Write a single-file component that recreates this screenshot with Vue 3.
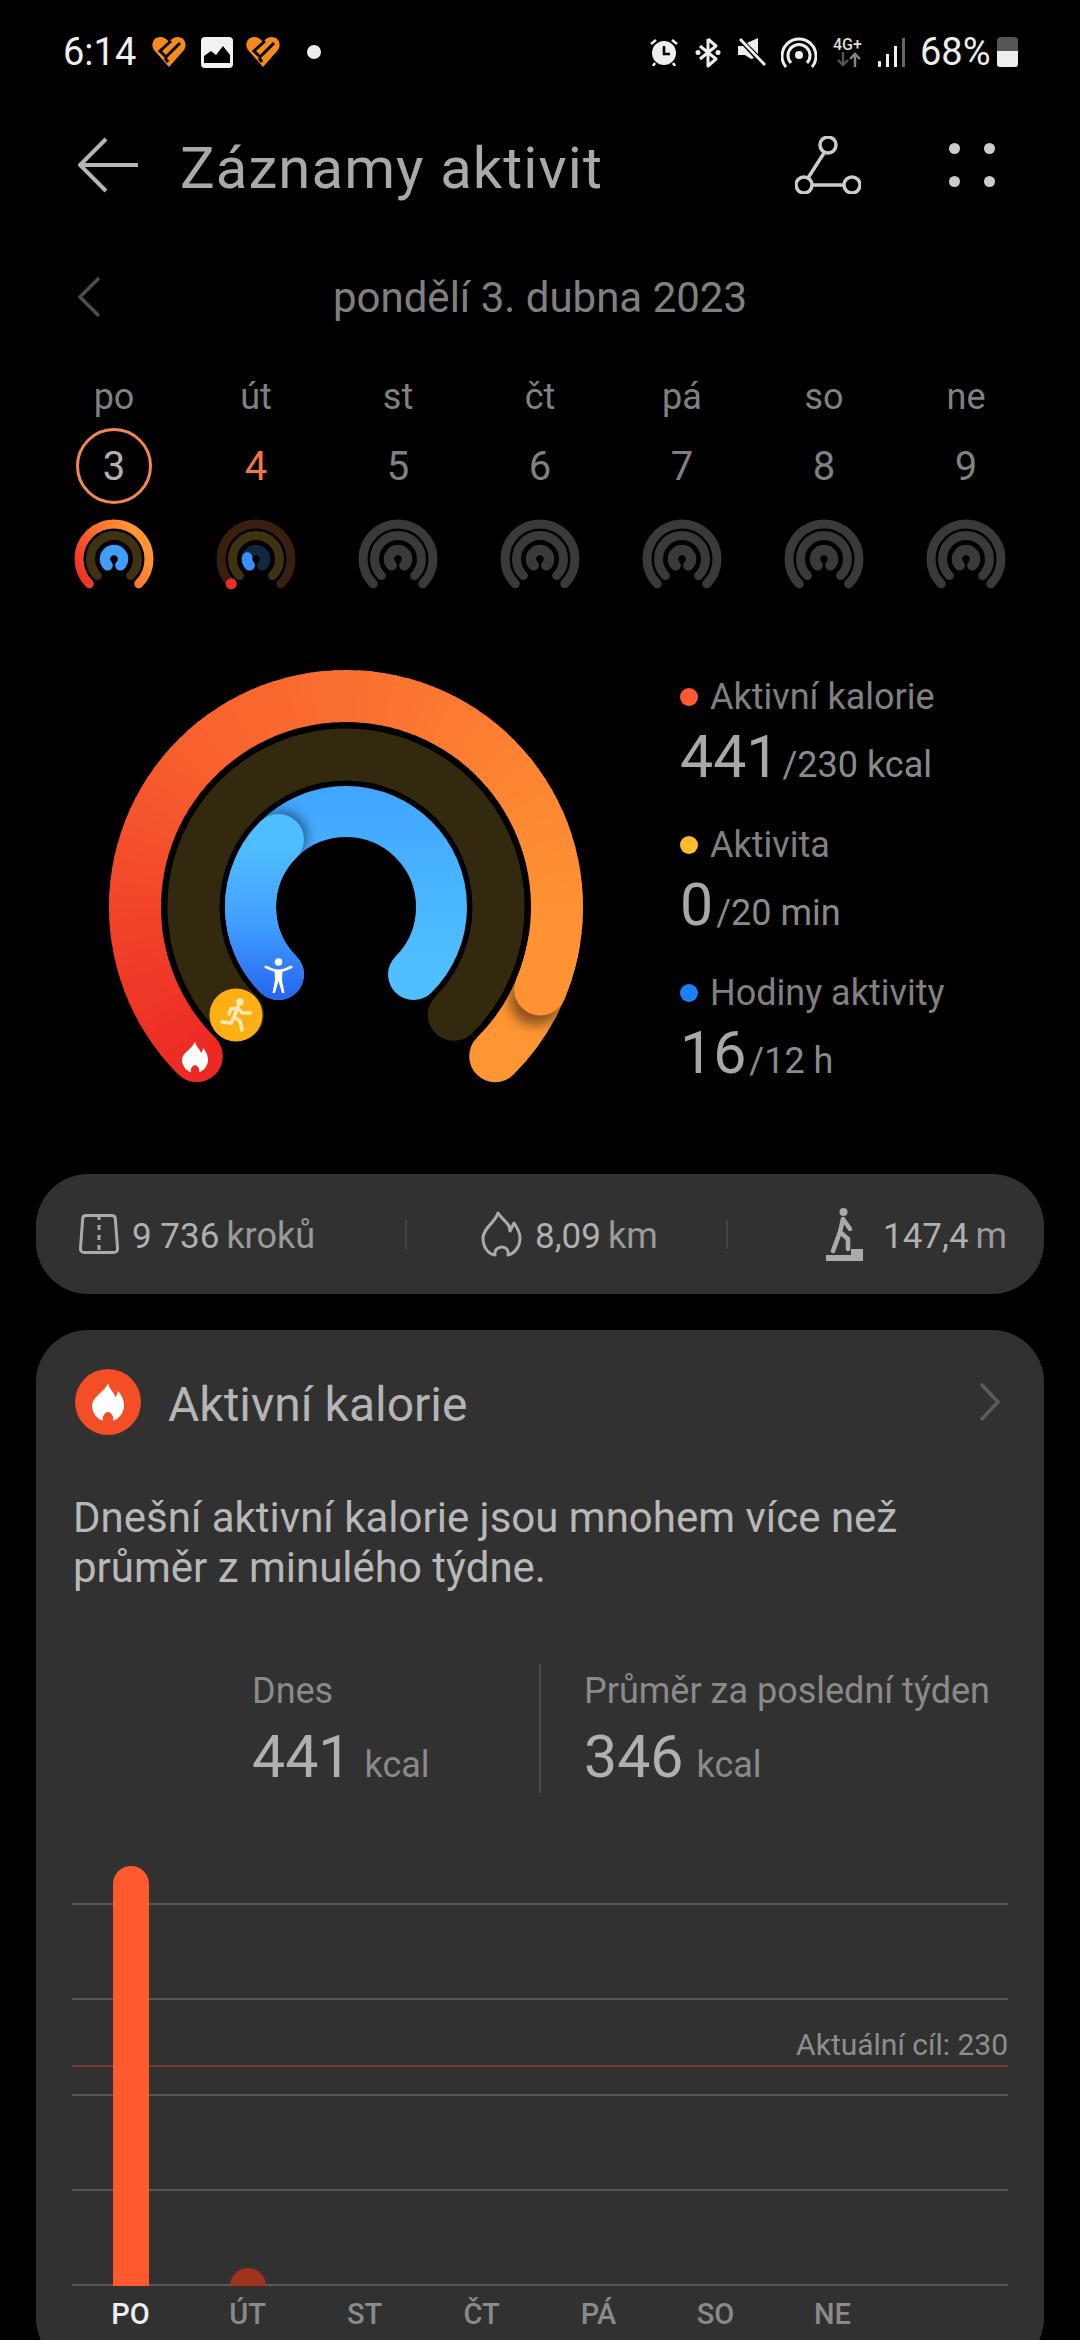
<template>
  <div class="page">
    <div class="status">
      <span class="time">6:14</span>
      <svg class="st-heart" viewBox="0 0 36 32">
        <path d="M18 31 3 14C-1 8 3 1 9 1c4 0 7 2 9 5 2-3 5-5 9-5 6 0 10 7 6 13Z" fill="#f58a1f" />
        <path d="M20 5 9 15l6 6L29 7M17 26l-3-4" fill="none" stroke="#000" stroke-width="3" />
      </svg>
      <svg class="st-image" viewBox="0 0 32 31">
        <rect x="0" y="0" width="32" height="31" rx="4" fill="#f2f2f2" />
        <path d="M3 26v-7l7-5 5 4 7-9 7 9v8Z" fill="#000" />
      </svg>
      <svg class="st-heart" viewBox="0 0 36 32">
        <path d="M18 31 3 14C-1 8 3 1 9 1c4 0 7 2 9 5 2-3 5-5 9-5 6 0 10 7 6 13Z" fill="#f58a1f" />
        <path d="M20 5 9 15l6 6L29 7M17 26l-3-4" fill="none" stroke="#000" stroke-width="3" />
      </svg>
      <span class="st-dot"></span>

      <div class="st-right">
        <svg class="ic-alarm" viewBox="0 0 28 28">
          <circle cx="14" cy="15" r="12" fill="#eee" />
          <path d="M14 8v8h6" fill="none" stroke="#000" stroke-width="2.6" />
          <path d="M1 6l5-4M27 6l-5-4M5 25l-2 3M23 25l2 3" stroke="#eee" stroke-width="2.6" fill="none" />
        </svg>
        <svg class="ic-bt" viewBox="0 0 26 31">
          <path d="M13 2v27l8-7-16-13M13 2l8 7-16 13" fill="none" stroke="#eee" stroke-width="3" stroke-linejoin="round" />
          <circle cx="3" cy="15.500" r="2.500" fill="#eee" />
          <circle cx="23" cy="15.500" r="2.500" fill="#eee" />
        </svg>
        <svg class="ic-mute" viewBox="0 0 29 28">
          <path d="M1 8h5l11 12-3 1-6-4H1Z" fill="#eee" />
          <path d="M21 0v16L10 5Z" fill="#eee" />
          <path d="M3 1l25 26" stroke="#eee" stroke-width="2.800" />
        </svg>
        <svg class="ic-spot" viewBox="0 0 36 31">
          <circle cx="18" cy="18" r="4" fill="#eee" />
          <path d="M10 26a11 11 0 1 1 16 0M5 30a17 17 0 1 1 26 0" fill="none" stroke="#eee" stroke-width="3" />
        </svg>
        <div class="net">
          <span>4G+</span>
          <svg viewBox="0 0 32 15" class="net-arrows">
            <path d="M10 0v13M5 8l5 5 5-5" fill="none" stroke="#555" stroke-width="2.400" />
            <path d="M22 15V2M17 7l5-5 5 5" fill="none" stroke="#888" stroke-width="2.400" />
          </svg>
        </div>
        <svg class="ic-signal" viewBox="0 0 27 29">
          <rect x="0" y="23" width="3" height="6" rx="1" fill="#eee" />
          <rect x="8" y="16" width="3" height="13" fill="#eee" />
          <rect x="16" y="8" width="3" height="21" fill="#eee" />
          <rect x="24" y="0" width="3" height="29" fill="#666" />
        </svg>
        <span class="pct">68%</span>
        <div class="battery">
          <div class="battery-empty"></div>
          <div class="battery-full"></div>
        </div>
      </div>
    </div>

    <div class="appbar">
      <svg class="back" viewBox="0 0 60 56">
        <path d="M28 2 2 28l26 26M2 28h58" fill="none" stroke="#b5b5b5" stroke-width="4" />
      </svg>
      <span class="title">Záznamy aktivit</span>
      <svg class="route" viewBox="0 0 66 58">
        <circle cx="33" cy="9" r="8" fill="none" stroke="#ccc" stroke-width="3.500" />
        <circle cx="9" cy="49" r="8" fill="none" stroke="#ccc" stroke-width="3.500" />
        <circle cx="57" cy="49" r="8" fill="none" stroke="#ccc" stroke-width="3.500" />
        <path d="M29 17 13 42M17 49h32" fill="none" stroke="#ccc" stroke-width="3.500" />
      </svg>
      <div class="more">
        <i></i><i></i><i></i><i></i>
      </div>
    </div>

    <div class="date-row">
      <svg class="date-prev" viewBox="0 0 22 40">
        <path d="M21 1 2 20l19 19" fill="none" stroke="#4d4d4d" stroke-width="3.500" />
      </svg>
      <span class="date">pondělí 3. dubna 2023</span>
      <span></span>
    </div>

    <div class="week">
      <div v-for="d in days" :key="d.num" class="day">
        <span class="day-label">{{ d.label }}</span>
        <span class="day-num" :class="d.cls">{{ d.num }}</span>
        <svg class="mini" viewBox="0 0 80 70">
          <defs>
            <linearGradient id="miniOuter" gradientUnits="userSpaceOnUse" x1="8" y1="68" x2="72" y2="30">
              <stop offset="0" stop-color="#ee2a24" />
              <stop offset="0.55" stop-color="#fb7030" />
              <stop offset="1" stop-color="#ff9633" />
            </linearGradient>
          </defs>
          <path :d="arc(40, 40, 35, -135, 135)" class="arc" :stroke="d.outer" stroke-width="9" />
          <path :d="arc(40, 40, 23.5, -135, 135)" class="arc" :stroke="d.mid" stroke-width="9" />
          <path :d="arc(40, 40, 9, -135, 135)" class="arc" :stroke="d.inner" stroke-width="10.5" />
          <path v-if="d.cls === 'tomorrow'" :d="arc(40, 40, 9, -135, -80)" class="arc" stroke="#3a8fff" stroke-width="10.5" />
          <circle v-if="d.cls === 'tomorrow'" :cx="pt(40, 40, 35, -135).x" :cy="pt(40, 40, 35, -135).y" r="5.500" fill="#ee2d24" />
        </svg>
      </div>
    </div>

    <div class="summary">
      <svg class="rings" viewBox="0 0 474 420">
        <defs>
          <linearGradient id="blueBase" gradientUnits="userSpaceOnUse" x1="237" y1="120" x2="237" y2="300">
            <stop offset="0" stop-color="#40a6ff" />
            <stop offset="1" stop-color="#50bfff" />
          </linearGradient>
          <linearGradient id="blueHead" gradientUnits="userSpaceOnUse" x1="170" y1="175" x2="170" y2="330">
            <stop offset="0" stop-color="#4fbdff" />
            <stop offset="0.5" stop-color="#429fff" />
            <stop offset="1" stop-color="#2565f0" />
          </linearGradient>
          <filter id="soft" x="-50%" y="-50%" width="200%" height="200%">
            <feGaussianBlur stdDeviation="6" />
          </filter>
          <mask id="outerMask" maskUnits="userSpaceOnUse" x="0" y="0" width="474" height="420">
            <path :d="arc(237, 237, 211, -135, 135)" class="arc" stroke="#fff" stroke-width="52" />
          </mask>
          <mask id="blueMask" maskUnits="userSpaceOnUse" x="0" y="0" width="474" height="420">
            <path :d="arc(237, 237, 95.5, -135, 135)" class="arc" stroke="#fff" stroke-width="51" />
          </mask>
        </defs>

        <!-- vnější kruh: přebíhá přes cíl, hlava leží nad koncem -->
        <path :d="arc(237, 237, 211, 100, 135)" class="arc" stroke="#ff9633" stroke-width="52" />
        <g mask="url(#outerMask)">
          <circle :cx="pt(237, 237, 211, 116).x" :cy="pt(237, 237, 211, 116).y" r="26" fill="#000" opacity="0.45" filter="url(#soft)" />
        </g>
        <circle :cx="pt(237, 237, 211, -135).x" :cy="pt(237, 237, 211, -135).y" r="26" :fill="outerStops[0][1]" />
        <circle :cx="pt(237, 237, 211, 113).x" :cy="pt(237, 237, 211, 113).y" r="26" fill="#ff9333" />
        <path v-for="s in outerSegments" :key="s.d" :d="s.d" fill="none" :stroke="s.color" stroke-width="52" />

        <path :d="arc(237, 237, 152.5, -135, 135)" class="arc" stroke="#33290f" stroke-width="52" />

        <path :d="arc(237, 237, 95.5, -135, 135)" class="arc" stroke="url(#blueBase)" stroke-width="51" />
        <g mask="url(#blueMask)">
          <circle :cx="pt(237, 237, 95.5, -42).x" :cy="pt(237, 237, 95.5, -42).y" r="25" fill="#000" opacity="0.45" filter="url(#soft)" />
        </g>
        <path :d="arc(237, 237, 95.5, -135, -45)" class="arc" stroke="url(#blueHead)" stroke-width="51" />

        <circle cx="127" cy="345" r="26.500" fill="#fdb015" />

        <!-- ikony na začátcích kruhů -->
        <g transform="translate(73 372)">
          <path d="M13 0c2 6 5 7 6 11 1-1 2-3 2-5 3 3 5 7 5 12 0 7-6 12-9 12 1-3-1-6-4-7-3 1-5 4-4 7-3 0-9-5-9-12C0 11 9 8 13 0Z" fill="#fff" />
        </g>
        <g transform="translate(156 288)">
          <circle cx="13.500" cy="4" r="3.800" fill="#fff" />
          <path d="M1 9c6 3 9 4 12.500 4S20 12 26 9" fill="none" stroke="#fff" stroke-width="3" stroke-linecap="round" />
          <path d="M9.500 13h8l-.5 9 2.500 13h-2.500l-3.500-12-3.500 12H7.500L10 22Z" fill="#fff" />
        </g>
        <g transform="translate(111 328)" fill="none" stroke="#fdeab5" stroke-width="3.500" stroke-linejoin="round" stroke-linecap="round">
          <circle cx="20" cy="4" r="3.800" fill="#fdeab5" stroke="none" />
          <path d="M14 19l4-10M18 10l-7 1-2 5M18 10l4 5h8M14 19l6 4 2 9M14 19l-3 6-9-1" />
        </g>
      </svg>

      <div class="legend">
        <div v-for="l in legend" :key="l.name" class="legend-item">
          <div class="legend-label">
            <span class="legend-dot" :style="{ background: l.color }"></span>{{ l.name }}
          </div>
          <div class="legend-value">{{ l.value }}<span>{{ l.unit }}</span></div>
        </div>
      </div>
    </div>

    <div class="stats">
      <div class="stat stat-steps">
        <svg class="ic-road" viewBox="0 0 40 40">
          <path d="M7 1.500h26q3 0 3.300 3L38.500 34q.3 4.500-4 4.500h-29q-4.300 0-4-4.500L3.700 4.500Q4 1.500 7 1.500Z" fill="none" stroke="#aaa" stroke-width="3" />
          <path d="M20 1v38" stroke="#aaa" stroke-width="3" stroke-dasharray="5 5" />
        </svg>
        <b>9 736</b><span>kroků</span>
      </div>
      <i class="stat-sep"></i>
      <div class="stat stat-dist">
        <svg class="ic-flame" viewBox="0 0 41 46">
          <path d="M17 2c3 5 9 9 11 13l1 5 4-8c4 6 6 10 6 15 0 9-6 16-12 17 1-5-2-8-6-8s-8 3-7 8C7 43 2 36 2 27 2 17 14 12 17 2Z" fill="none" stroke="#aaa" stroke-width="3" stroke-linejoin="round" />
        </svg>
        <b>8,09</b><span>km</span>
      </div>
      <i class="stat-sep"></i>
      <div class="stat stat-climb">
        <svg class="ic-stairs" viewBox="0 0 37 53">
          <circle cx="17.500" cy="4" r="4" fill="#aaa" />
          <path d="M17 11l-3 13-7 19M14 24l8 7v10M17 11l7 10" fill="none" stroke="#aaa" stroke-width="4.500" stroke-linecap="round" stroke-linejoin="round" />
          <path d="M25 41h12v12H0v-6h25Z" fill="#aaa" />
        </svg>
        <b>147,4</b><span>m</span>
      </div>
    </div>

    <div class="card">
      <div class="card-head">
        <div class="flame-badge">
          <svg viewBox="0 0 26 30">
            <path d="M13 0c2 6 5 7 6 11 1-1 2-3 2-5 3 3 5 7 5 12 0 7-6 12-9 12 1-3-1-6-4-7-3 1-5 4-4 7-3 0-9-5-9-12C0 11 9 8 13 0Z" fill="#fff" />
          </svg>
        </div>
        <span class="card-title">Aktivní kalorie</span>
        <svg class="card-next" viewBox="0 0 20 38">
          <path d="M1 1l17 18L1 37" fill="none" stroke="#5c5c5c" stroke-width="3.500" />
        </svg>
      </div>

      <p class="desc">Dnešní aktivní kalorie jsou mnohem více než průměr z minulého týdne.</p>

      <div class="compare">
        <div class="cmp cmp-today">
          <div class="cmp-label">Dnes</div>
          <div class="cmp-value">441<span>kcal</span></div>
        </div>
        <i class="cmp-sep"></i>
        <div class="cmp cmp-avg">
          <div class="cmp-label">Průměr za poslední týden</div>
          <div class="cmp-value">346<span>kcal</span></div>
        </div>
      </div>

      <div class="chart">
        <div class="lines">
          <i v-for="n in 5" :key="n"></i>
        </div>
        <div class="goal"><span>Aktuální cíl: 230</span></div>
        <div class="bars">
          <div v-for="b in bars" :key="b.label" class="bar-col">
            <div v-if="b.h" class="bar" :style="{ height: b.h + 'px', background: b.color }"></div>
          </div>
        </div>
      </div>
      <div class="axis">
        <span v-for="(b, i) in bars" :key="b.label" :class="{ on: i === 0 }">{{ b.label }}</span>
      </div>
    </div>
  </div>
</template>

<script setup>
const grey = '#3a3a3a'

const days = [
  { label: 'po', num: 3, cls: 'today', outer: 'url(#miniOuter)', mid: '#3f3213', inner: '#3f9dff' },
  { label: 'út', num: 4, cls: 'tomorrow', outer: '#3a1f10', mid: '#3f3213', inner: '#10293f' },
  { label: 'st', num: 5, cls: '', outer: grey, mid: grey, inner: grey },
  { label: 'čt', num: 6, cls: '', outer: grey, mid: grey, inner: grey },
  { label: 'pá', num: 7, cls: '', outer: grey, mid: grey, inner: grey },
  { label: 'so', num: 8, cls: '', outer: grey, mid: grey, inner: grey },
  { label: 'ne', num: 9, cls: '', outer: grey, mid: grey, inner: grey }
]

const legend = [
  { name: 'Aktivní kalorie', color: '#ff5a32', value: '441', unit: '/230 kcal' },
  { name: 'Aktivita', color: '#ffba2e', value: '0', unit: '/20 min' },
  { name: 'Hodiny aktivity', color: '#1a80ff', value: '16', unit: '/12 h' }
]

const bars = [
  { label: 'PO', h: 420, color: '#ff5a2e' },
  { label: 'ÚT', h: 18, color: '#a0321e' },
  { label: 'ST', h: 0 },
  { label: 'ČT', h: 0 },
  { label: 'PÁ', h: 0 },
  { label: 'SO', h: 0 },
  { label: 'NE', h: 0 }
]

// úhel ve stupních, 0 = nahoře, po směru hodin
function pt(cx, cy, r, deg) {
  const a = (deg * Math.PI) / 180
  return { x: cx + r * Math.sin(a), y: cy - r * Math.cos(a) }
}

function arc(cx, cy, r, from, to) {
  const s = pt(cx, cy, r, from)
  const e = pt(cx, cy, r, to)
  const large = to - from > 180 ? 1 : 0
  return `M${s.x} ${s.y}A${r} ${r} 0 ${large} 1 ${e.x} ${e.y}`
}

// barvy vnějšího kruhu podle úhlu
const outerStops = [
  [-135, '#ec2a24'],
  [-90, '#f2452a'],
  [-45, '#f8612d'],
  [0, '#fa6e30'],
  [45, '#fd8132'],
  [90, '#ff9233'],
  [113, '#ff9333']
]

function mix(a, b, t) {
  const ch = (c, i) => parseInt(c.slice(1 + i * 2, 3 + i * 2), 16)
  const out = [0, 1, 2].map((i) => Math.round(ch(a, i) + (ch(b, i) - ch(a, i)) * t))
  return `rgb(${out.join(',')})`
}

function colorAt(deg) {
  for (let i = 0; i < outerStops.length - 1; i++) {
    const [a, ca] = outerStops[i]
    const [b, cb] = outerStops[i + 1]
    if (deg <= b) return mix(ca, cb, (deg - a) / (b - a))
  }
  return outerStops[outerStops.length - 1][1]
}

const outerSegments = []
for (let a = -135; a < 113; a += 3) {
  outerSegments.push({ d: arc(237, 237, 211, a, Math.min(a + 3.6, 113)), color: colorAt(a + 1.5) })
}
</script>

<style scoped>
.page {
  width: 1080px;
  height: 2340px;
  overflow: hidden;
  background: #000;
  font-family: Roboto, "Noto Sans", sans-serif;
  color: #aaa;
}

.status {
  height: 104px;
  display: flex;
  align-items: center;
  padding: 0 62px 0 63px;
  box-sizing: border-box;
}
.time {
  font-size: 38px;
  color: #eee;
  width: 88px;
}
.st-heart {
  width: 36px;
  height: 32px;
}
.st-image {
  width: 32px;
  height: 31px;
  margin: 0 12px 0 14px;
}
.st-dot {
  width: 14px;
  height: 14px;
  border-radius: 50%;
  background: #eee;
  margin-left: 26px;
}
.st-right {
  margin-left: auto;
  display: flex;
  align-items: center;
}
.ic-alarm {
  width: 28px;
  height: 28px;
}
.ic-bt {
  width: 26px;
  height: 31px;
  margin-left: 17px;
}
.ic-mute {
  width: 29px;
  height: 28px;
  margin-left: 16px;
}
.ic-spot {
  width: 36px;
  height: 31px;
  margin-left: 15px;
}
.net {
  width: 32px;
  margin-left: 16px;
  display: flex;
  flex-direction: column;
  font-size: 16px;
  font-weight: 500;
  line-height: 15px;
  color: #ddd;
  white-space: nowrap;
}
.net-arrows {
  width: 32px;
  height: 15px;
}
.ic-signal {
  width: 27px;
  height: 29px;
  margin-left: 13px;
}
.pct {
  font-size: 38px;
  color: #eee;
  margin-left: 15px;
  width: 71px;
  white-space: nowrap;
}
.battery {
  width: 21px;
  height: 30px;
  margin-left: 6px;
  border-radius: 4px 4px 3px 3px;
  overflow: hidden;
}
.battery-empty {
  height: 14px;
  background: #555;
}
.battery-full {
  height: 16px;
  background: #eee;
}

.appbar {
  height: 122px;
  display: flex;
  align-items: center;
  padding-left: 78px;
}
.back {
  width: 60px;
  height: 56px;
}
.title {
  font-size: 58px;
  letter-spacing: 1.1px;
  color: #a9a9a9;
  margin-left: 42px;
  padding-top: 5px;
  white-space: nowrap;
}
.route {
  width: 66px;
  height: 58px;
  margin-left: auto;
}
.more {
  width: 46px;
  height: 44px;
  margin: 0 85px 0 88px;
  display: grid;
  grid-template-columns: 11px 11px;
  justify-content: space-between;
  align-content: space-between;
}
.more i {
  width: 11px;
  height: 11px;
  border-radius: 50%;
  background: #ccc;
}

.date-row {
  margin-top: 41px;
  height: 60px;
  padding: 0 78px;
  display: grid;
  grid-template-columns: 1fr auto 1fr;
  align-items: center;
}
.date-prev {
  width: 22px;
  height: 40px;
}
.date {
  font-size: 42px;
  color: #808080;
}

.week {
  margin-top: 48px;
  padding: 0 43px;
  display: grid;
  grid-template-columns: repeat(7, 142px);
}
.day {
  display: flex;
  flex-direction: column;
  align-items: center;
}
.day-label {
  font-size: 36px;
  line-height: 44px;
  color: #808080;
}
.day-num {
  margin-top: 9px;
  width: 76px;
  height: 76px;
  box-sizing: border-box;
  border-radius: 50%;
  display: flex;
  align-items: center;
  justify-content: center;
  font-size: 40px;
  color: #808080;
}
.day-num.today {
  border: 3px solid #f0884f;
  color: #b0b0b0;
}
.day-num.tomorrow {
  color: #f0764a;
}
.mini {
  width: 80px;
  height: 70px;
  margin-top: 15px;
}
.arc {
  fill: none;
  stroke-linecap: round;
}

.summary {
  margin-top: 81px;
  height: 420px;
  padding-left: 109px;
  display: flex;
}
.rings {
  width: 474px;
  height: 420px;
  flex: none;
}
.legend {
  margin-left: 97px;
  padding-top: 5px;
  display: flex;
  flex-direction: column;
  gap: 32px;
}
.legend-label {
  display: flex;
  align-items: center;
  font-size: 36px;
  line-height: 44px;
  color: #808080;
}
.legend-dot {
  width: 18px;
  height: 18px;
  border-radius: 50%;
  margin-right: 12px;
}
.legend-value {
  margin-top: 4px;
  font-size: 59px;
  line-height: 68px;
  color: #a8a8a8;
}
.legend-value span {
  font-size: 36px;
  line-height: 1;
  color: #8a8a8a;
  margin-left: 3px;
}

.stats {
  margin: 84px 36px 0;
  height: 120px;
  border-radius: 52px;
  background: #313131;
  display: flex;
  align-items: center;
}
.stat {
  display: flex;
  align-items: center;
  height: 100%;
  box-sizing: border-box;
}
.stat b {
  font-weight: 400;
  font-size: 35px;
  color: #b0b0b0;
  padding-top: 4px;
}
.stat span {
  font-size: 36px;
  color: #9a9a9a;
  margin-left: 7px;
  padding-top: 4px;
}
.stat-steps {
  width: 369px;
  padding-left: 43px;
}
.stat-dist {
  width: 319px;
  padding-left: 74px;
}
.stat-climb {
  padding-left: 98px;
}
.stat-sep {
  width: 2px;
  height: 29px;
  background: #444;
}
.ic-road {
  width: 40px;
  height: 40px;
  margin-right: 13px;
}
.ic-flame {
  width: 41px;
  height: 46px;
  margin-right: 13px;
}
.ic-stairs {
  width: 37px;
  height: 53px;
  margin-right: 20px;
}

.card {
  margin: 36px 36px 0;
  height: 1040px;
  border-radius: 52px;
  background: #313131;
  padding-top: 39px;
  box-sizing: border-box;
}
.card-head {
  display: flex;
  align-items: center;
  height: 66px;
  padding: 0 44px 0 39px;
}
.flame-badge {
  width: 66px;
  height: 66px;
  border-radius: 50%;
  background: #f44e27;
  display: flex;
  align-items: center;
  justify-content: center;
}
.flame-badge svg {
  width: 32px;
  height: 38px;
}
.card-title {
  margin-left: 27px;
  padding-top: 4px;
  font-size: 48px;
  color: #b5b5b5;
}
.card-next {
  width: 20px;
  height: 38px;
  margin-left: auto;
}
.desc {
  margin: 58px 80px 0 37px;
  font-size: 42px;
  line-height: 50px;
  color: #b8b8b8;
}
.compare {
  margin-top: 71px;
  height: 129px;
  display: flex;
}
.cmp {
  padding-top: 5px;
}
.cmp-today {
  width: 287px;
  margin-left: 216px;
}
.cmp-avg {
  margin-left: 43px;
}
.cmp-sep {
  width: 2px;
  background: #4a4a4a;
}
.cmp-label {
  font-size: 36px;
  line-height: 44px;
  color: #8a8a8a;
}
.cmp-value {
  margin-top: 10px;
  font-size: 59px;
  line-height: 68px;
  color: #b0b0b0;
}
.cmp-value span {
  font-size: 36px;
  line-height: 1;
  color: #8a8a8a;
  margin-left: 13px;
}

.chart {
  position: relative;
  margin: 72px 36px 0;
  height: 421px;
}
.lines {
  position: absolute;
  left: 0;
  right: 0;
  top: 38px;
  bottom: 0;
  display: flex;
  flex-direction: column;
  justify-content: space-between;
}
.lines i {
  height: 2px;
  background: #565656;
}
.goal {
  position: absolute;
  left: 0;
  right: 0;
  top: 200px;
  height: 2px;
  background: #7b3b2b;
}
.goal span {
  position: absolute;
  right: 0;
  bottom: 0;
  font-size: 30px;
  line-height: 44px;
  color: #8e8e8e;
  white-space: nowrap;
}
.bars {
  position: relative;
  height: 100%;
  display: grid;
  grid-template-columns: repeat(7, 117px);
}
.bar-col {
  display: flex;
  align-items: flex-end;
  justify-content: center;
}
.bar {
  width: 36px;
  border-radius: 18px 18px 0 0;
}
.axis {
  margin: 8px 36px 0;
  display: grid;
  grid-template-columns: repeat(7, 117px);
  text-align: center;
  font-size: 29px;
  font-weight: 500;
  line-height: 40px;
  color: #8a8a8a;
}
.axis .on {
  color: #eee;
}
</style>

<style>
html,
body {
  margin: 0;
  background: #000;
}
</style>
